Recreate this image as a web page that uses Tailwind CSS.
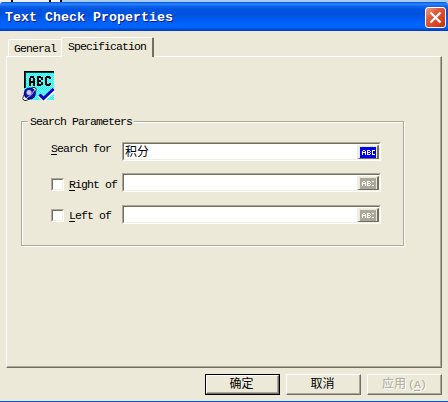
<!DOCTYPE html>
<html lang="zh-CN">
<head>
<meta charset="utf-8">
<title>Text Check Properties</title>
<script src="https://cdn.jsdelivr.net/npm/@tailwindcss/browser@4"></script>
</head>
<body class="w-[448px] h-[402px] overflow-hidden bg-[#ece9d8] text-black font-['Liberation_Mono','Noto_Sans_CJK_SC',monospace] text-[11.5px] leading-[14px] tracking-[-0.9px]">
<div class="flex h-[402px] flex-col border-b border-[#0058f0]">
  <div class="flex h-[2px] shrink-0 bg-[#a6caf0]"><span class="w-[51px] bg-[linear-gradient(90deg,#eee_0_11px,#111_11px_13px,#eee_13px_49px,#111_49px_51px)]"></span><span class="w-[9px] bg-white"></span><span class="w-[2px] bg-black"></span></div>
  <header class="flex h-[29px] shrink-0 items-center justify-between rounded-t-[3px] bg-[linear-gradient(180deg,#0050dc_0,#2e86ff_2px,#1068ee_4px,#0054e0_7px,#0053df_13px,#0060fa_20px,#0066ff_25px,#0050dc_27px,#0038bb_29px)] pl-[5px] pr-[2px]">
    <h1 class="pt-[2px] text-[13.333px] font-bold leading-[16px] tracking-[0px] text-white [text-shadow:1px_1px_0_#0a1883]">Text Check Properties</h1>
    <button class="mt-px flex h-[21px] w-[21px] items-center justify-center rounded-[3px] border border-white bg-[linear-gradient(135deg,#eea08a_0,#e05c3c_35%,#da4320_70%,#b83410_100%)]">
      <svg width="13" height="13" viewBox="0 0 13 13"><path d="M1.500 1.500L11.500 11.500M11.500 1.500L1.500 11.500" stroke="#fff" stroke-width="2.200"/></svg>
    </button>
  </header>

  <nav class="flex h-[25px] shrink-0 items-end pl-[8px]">
    <div class="h-[17px] w-[53px] rounded-tl-[2px] border-l border-t border-white pl-[5px] pt-[2px]">General</div>
    <div class="relative z-10 -mb-px h-[20px] w-[93px] rounded-t-[2px] border-l border-r-2 border-t border-white border-r-[#716f64] bg-[#ece9d8] pl-[6px] pt-[2px]">Specification</div>
  </nav>

  <main class="ml-[6px] h-[312px] w-[436px] shrink-0 border border-white border-b-[#716f64] border-r-[#716f64]">
    <div class="h-full border-b border-r border-[#aca899] pl-[14px] pt-[13px]">
      <svg width="34" height="33" viewBox="0 0 34 33" shape-rendering="crispEdges">
        <defs>
          <pattern id="dither" width="2" height="2" patternUnits="userSpaceOnUse"><rect width="2" height="2" fill="#00ffff"/><path d="M0 0h1v1H0z" fill="#c8f0f0"/><path d="M1 1h1v1H1z" fill="#70f4f4"/></pattern>
        </defs>
        <path d="M3 1H33V30H3Z" fill="url(#dither)"/>
        <path d="M3 1H33V2H4V18H3Z" fill="#000"/>
        <path d="M4 2.500H33M4.500 3V18" stroke="#003c3c" fill="none"/>
        <g fill="none" stroke="#000" stroke-width="2">
          <path d="M9 16V8M13 16V8M9 7H13M9 12H13"/>
          <path d="M17 6V16M16 7H20M16 11H20M16 15H20M21 7V10M21 12V15"/>
          <path d="M29 9V7M25 7V15M25 7H29M25 15H29M29 13V15"/>
        </g>
        <g shape-rendering="auto">
          <ellipse cx="8.500" cy="24" rx="8.500" ry="3.800" transform="rotate(-45 8.500 24)" fill="#fff" stroke="#000" stroke-width=".8"/>
          <circle cx="8.800" cy="23.500" r="6" fill="#000080"/>
          <circle cx="8.800" cy="23" r="4.500" fill="#1818c0"/>
          <circle cx="8" cy="22.500" r="2.500" fill="#c8c8d8"/>
          <path d="M2 28Q3 30 6 28Q11 25 14.500 19" fill="none" stroke="#ddd" stroke-width=".8"/>
          <path d="M18 25L23 29L33 20" fill="none" stroke="#fff" stroke-width="4.500"/>
          <path d="M18.500 24.500L22.500 28.500L32.500 19" fill="none" stroke="#000070" stroke-width="3"/>
          <path d="M19 24.500L22.500 28L32.500 18.800" fill="none" stroke="#0000f0" stroke-width="1.700"/>
        </g>
      </svg>

      <section class="mt-[18px] h-[125px] w-[383px] border border-[#aca899] shadow-[1px_1px_0_#fff,inset_1px_1px_0_#fff]">
        <h2 class="ml-[6px] -mt-[8px] h-[15px] w-[106px] bg-[#ece9d8] pl-[2px] pt-px">Search Parameters</h2>
        <div class="mt-[13px] flex w-[359px] flex-col">
          <div class="flex h-[31px] items-start">
            <label class="w-[100px] pl-[29px]"><u class="underline-offset-2">S</u>earch for</label>
            <div class="flex h-[19px] w-[259px] border border-[#aca899] border-b-white border-r-white bg-white"><div class="flex w-full border border-[#716f64] border-b-[#f1efe2] border-r-[#f1efe2] pl-px">
              <span class="grow text-[12px] leading-[14px] tracking-normal font-['Noto_Sans_CJK_SC',sans-serif]">积分</span>
              <button class="mt-px flex h-[14px] w-[22px] items-center justify-center border-l-2 border-t border-b border-r-2 border-[#f1efe2] border-b-[#716f64] border-r-[#716f64] bg-[#ece9d8]"><svg width="16" height="11" viewBox="0 0 16 11" shape-rendering="crispEdges"><path fill="#0000e8" d="M0 0H16V11H0Z"/><path d="M2.500 8V4M3 3.500H5M5.500 4V8M3 5.500H5M7.500 8V3M8 3.500H10M8 5.500H10M8 7.500H10M10.500 4V5M10.500 6V7M14.500 3.500H12.500V7.500H14.500" fill="none" stroke="#fff"/></svg></button>
            </div></div>
          </div>
          <div class="flex h-[32px] items-start">
            <label class="flex w-[100px] items-start gap-[5px] pl-[29px] pt-[5px]"><span class="h-[13px] w-[13px] shrink-0 border border-[#aca899] border-b-white border-r-white bg-white"><span class="block h-full border border-[#716f64] border-b-[#f1efe2] border-r-[#f1efe2]"></span></span><span class="whitespace-nowrap"><u class="underline-offset-2">R</u>ight of</span></label>
            <div class="flex h-[19px] w-[259px] border border-[#aca899] border-b-white border-r-white bg-white"><div class="flex w-full justify-end border border-[#716f64] border-b-[#f1efe2] border-r-[#f1efe2]">
              <button class="mt-px flex h-[14px] w-[22px] items-center justify-center border-l-2 border-t border-b border-r-2 border-[#f1efe2] border-b-[#716f64] border-r-[#716f64] bg-[#ece9d8]"><svg width="16" height="11" viewBox="0 0 16 11" shape-rendering="crispEdges"><path fill="#aca899" d="M0 0H16V11H0Z"/><path d="M2.500 8V4M3 3.500H5M5.500 4V8M3 5.500H5M7.500 8V3M8 3.500H10M8 5.500H10M8 7.500H10M10.500 4V5M10.500 6V7M12 3.500H14M12 7.500H14" fill="none" stroke="#fff"/></svg></button>
            </div></div>
          </div>
          <div class="flex h-[32px] items-start">
            <label class="flex w-[100px] items-start gap-[5px] pl-[29px] pt-[4px]"><span class="h-[13px] w-[13px] shrink-0 border border-[#aca899] border-b-white border-r-white bg-white"><span class="block h-full border border-[#716f64] border-b-[#f1efe2] border-r-[#f1efe2]"></span></span><span class="whitespace-nowrap"><u class="underline-offset-2">L</u>eft of</span></label>
            <div class="flex h-[19px] w-[259px] border border-[#aca899] border-b-white border-r-white bg-white"><div class="flex w-full justify-end border border-[#716f64] border-b-[#f1efe2] border-r-[#f1efe2]">
              <button class="mt-px flex h-[14px] w-[22px] items-center justify-center border-l-2 border-t border-b border-r-2 border-[#f1efe2] border-b-[#716f64] border-r-[#716f64] bg-[#ece9d8]"><svg width="16" height="11" viewBox="0 0 16 11" shape-rendering="crispEdges"><path fill="#aca899" d="M0 0H16V11H0Z"/><path d="M2.500 8V4M3 3.500H5M5.500 4V8M3 5.500H5M7.500 8V3M8 3.500H10M8 5.500H10M8 7.500H10M10.500 4V5M10.500 6V7M12 3.500H14M12 7.500H14" fill="none" stroke="#fff"/></svg></button>
            </div></div>
          </div>
        </div>
      </section>
    </div>
  </main>

  <footer class="mt-[6px] flex gap-[6px] pl-[205px] text-[12px] tracking-normal">
    <button class="h-[21px] w-[75px] border border-black"><span class="flex h-full items-center justify-center border border-white border-b-[#716f64] border-r-[#716f64] pr-[2px] shadow-[inset_-1px_-1px_0_#aca899]">确定</span></button>
    <button class="flex h-[21px] w-[75px] items-center justify-center border border-white border-b-[#716f64] border-r-[#716f64] pr-[2px] shadow-[inset_-1px_-1px_0_#aca899]">取消</button>
    <button class="flex h-[21px] w-[75px] items-center justify-center border border-white border-b-[#716f64] border-r-[#716f64] pr-px text-[#aca899] shadow-[inset_-1px_-1px_0_#aca899] [text-shadow:1px_1px_0_#fff]">应用<span class="ml-[2px] text-[11.5px] tracking-[-0.9px]">(<u class="underline-offset-2">A</u>)</span></button>
  </footer>
</div>
</body>
</html>
